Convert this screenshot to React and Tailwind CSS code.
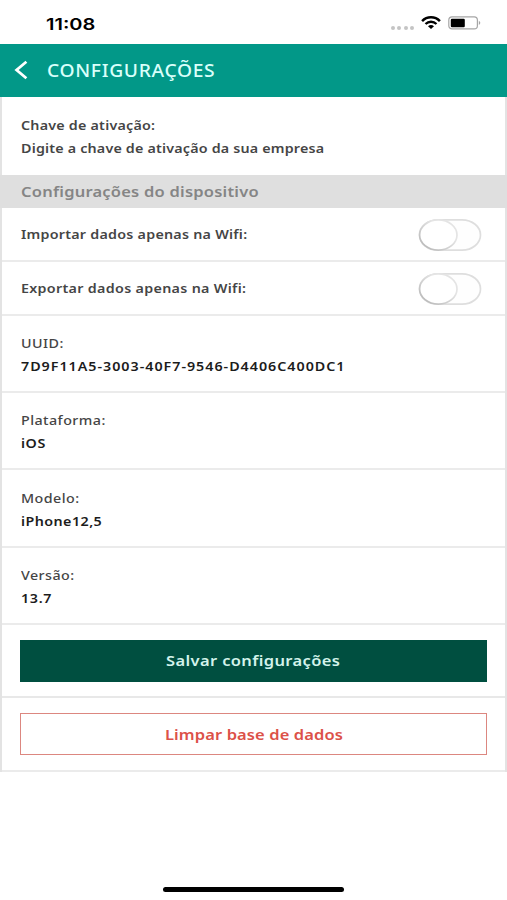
import React from 'react';

const deviceInfo = [
    { label: 'UUID:', value: '7D9F11A5-3003-40F7-9546-D4406C400DC1', spacing: 'tracking-[0.89px]' },
    { label: 'Plataforma:', value: 'iOS', spacing: 'tracking-[0.5px]' },
    { label: 'Modelo:', value: 'iPhone12,5', spacing: 'tracking-[0.4px]' },
    { label: 'Versão:', value: '13.7', spacing: 'tracking-[0.6px]' },
];

const StatusBar = () => (
    <div className="flex h-[44px] items-center justify-between pl-[46px] pr-[26px] pt-[3px]">
        <span className="origin-left scale-x-[1.25] font-['Inter',sans-serif] text-[16px] font-semibold text-black">11:08</span>
        <div className="flex items-center">
            <div className="mr-[7px] mt-[8px] flex gap-[2.4px]">
                {[0, 1, 2, 3].map((dot) => (
                    <span key={dot} className="h-[4px] w-[4px] rounded-full bg-[#c4c4c4]" />
                ))}
            </div>
            <svg className="-mt-[2px] h-[13px] w-[20px]" viewBox="0 0 20 13" fill="none">
                <path d="M1.1 5.1C6 .1 14 .1 18.9 5.1" stroke="#000" strokeWidth="2.5" />
                <path d="M4.5 8C7.6 5 12.4 5 15.5 8" stroke="#000" strokeWidth="2.3" />
                <path d="M7 10.2c1.8-1.6 4.2-1.6 6 0l-3 2.7z" fill="#000" />
            </svg>
            <svg className="-mt-px ml-[7px] h-[14px] w-[33px]" viewBox="0 0 33 14" fill="none">
                <rect x=".8" y=".9" width="28.6" height="12" rx="3.2" stroke="#a6a6a6" strokeWidth="1.2" />
                <rect x="2.8" y="2.8" width="14" height="8.4" rx="1.2" fill="#000" />
                <path d="M30.8 4.8c2 .9 2 3.3 0 4.2z" fill="#a6a6a6" />
            </svg>
        </div>
    </div>
);

const Toggle = () => (
    <svg className="h-[34px] w-[66px]" viewBox="0 0 66 34" fill="none">
        <defs>
            <linearGradient id="knob" x1="1" y1="0" x2="0" y2="1">
                <stop offset=".35" stopColor="#e4e4e4" />
                <stop offset="1" stopColor="#b2b2b2" />
            </linearGradient>
        </defs>
        <rect x="2.5" y="1.8" width="61" height="30.4" rx="18.5" ry="15.2" fill="#fefefe" stroke="#dedede" strokeWidth="1.7" />
        <ellipse cx="21.3" cy="17" rx="18.7" ry="15.1" fill="#fff" stroke="url(#knob)" strokeWidth="1.7" />
    </svg>
);

const ToggleRow = ({ label, spacing }) => (
    <div className="flex h-[54.2px] items-center justify-between border-b-2 border-[#ebebeb] pl-[18.5px] pr-[22px] pt-[2px]">
        <span className={`origin-left scale-x-[1.1] whitespace-nowrap ${spacing}`}>{label}</span>
        <Toggle />
    </div>
);

const App = () => {
    return (
        <div className="flex h-[900px] w-[507px] flex-col overflow-hidden bg-white font-['Noto_Sans',sans-serif] text-[13px] font-semibold text-[#454545]">
            <StatusBar />

            {/* Header */}
            <header className="flex h-[53px] items-center bg-[#029888] pl-[14px] text-[#d9fffa]">
                <svg className="-mt-[2px] h-[20px] w-[14px]" viewBox="0 0 14 20" fill="none">
                    <path d="M12.4 1.8 2.6 10l9.8 8.2" stroke="#fff" strokeWidth="2.8" />
                </svg>
                <h1 className="ml-[19px] origin-left scale-x-[1.1] text-[17.5px] font-medium tracking-[0.6px]">CONFIGURAÇÕES</h1>
            </header>

            {/* Settings list */}
            <main className="border-x-2 border-[#e3e3e3]">
                <div className="flex h-[77.5px] flex-col justify-center pl-[18.5px] pt-[3px] leading-[23px]">
                    <span className="origin-left scale-x-[1.1] tracking-[0.2px]">Chave de ativação:</span>
                    <span className="origin-left scale-x-[1.1] tracking-[0.17px]">Digite a chave de ativação da sua empresa</span>
                </div>

                <div className="-mx-[2px] flex h-[33px] items-center bg-[#dfdfdf] pl-[20.5px]">
                    <h2 className="origin-left scale-x-[1.1] text-[15px] font-semibold tracking-[0.2px] text-[#858585]">Configurações do dispositivo</h2>
                </div>

                <ToggleRow label="Importar dados apenas na Wifi:" spacing="tracking-[0.22px]" />
                <ToggleRow label="Exportar dados apenas na Wifi:" spacing="tracking-[0.28px]" />

                {deviceInfo.map((item) => (
                    <div key={item.label} className="flex h-[77.3px] flex-col justify-center border-b-2 border-[#ebebeb] pl-[18.5px] pt-[3px] leading-[23px]">
                        <span className="origin-left scale-x-[1.1] font-medium tracking-[0.4px]">{item.label}</span>
                        <span className={`origin-left scale-x-[1.1] text-[#1c1c1c] ${item.spacing}`}>{item.value}</span>
                    </div>
                ))}

                <div className="flex h-[73.3px] items-center border-b-2 border-[#e8e8e8] px-[18px]">
                    <button className="h-[42px] w-full bg-[#004f40] text-[15px] text-[#d3f3eb]">
                        <span className="inline-block scale-x-[1.1] tracking-[0.33px]">Salvar configurações</span>
                    </button>
                </div>
                <div className="flex h-[73.7px] items-center border-b-2 border-[#ebebeb] px-[18px]">
                    <button className="h-[42px] w-full border-[1.5px] border-[#dc8780] text-[15px] text-[#dc5148]">
                        <span className="inline-block scale-x-[1.1] tracking-[0.1px]">Limpar base de dados</span>
                    </button>
                </div>
            </main>

            {/* Home indicator */}
            <div className="mx-auto mb-[8px] mt-auto h-[5px] w-[181px] rounded-full bg-black" />
        </div>
    );
};

export default App;
